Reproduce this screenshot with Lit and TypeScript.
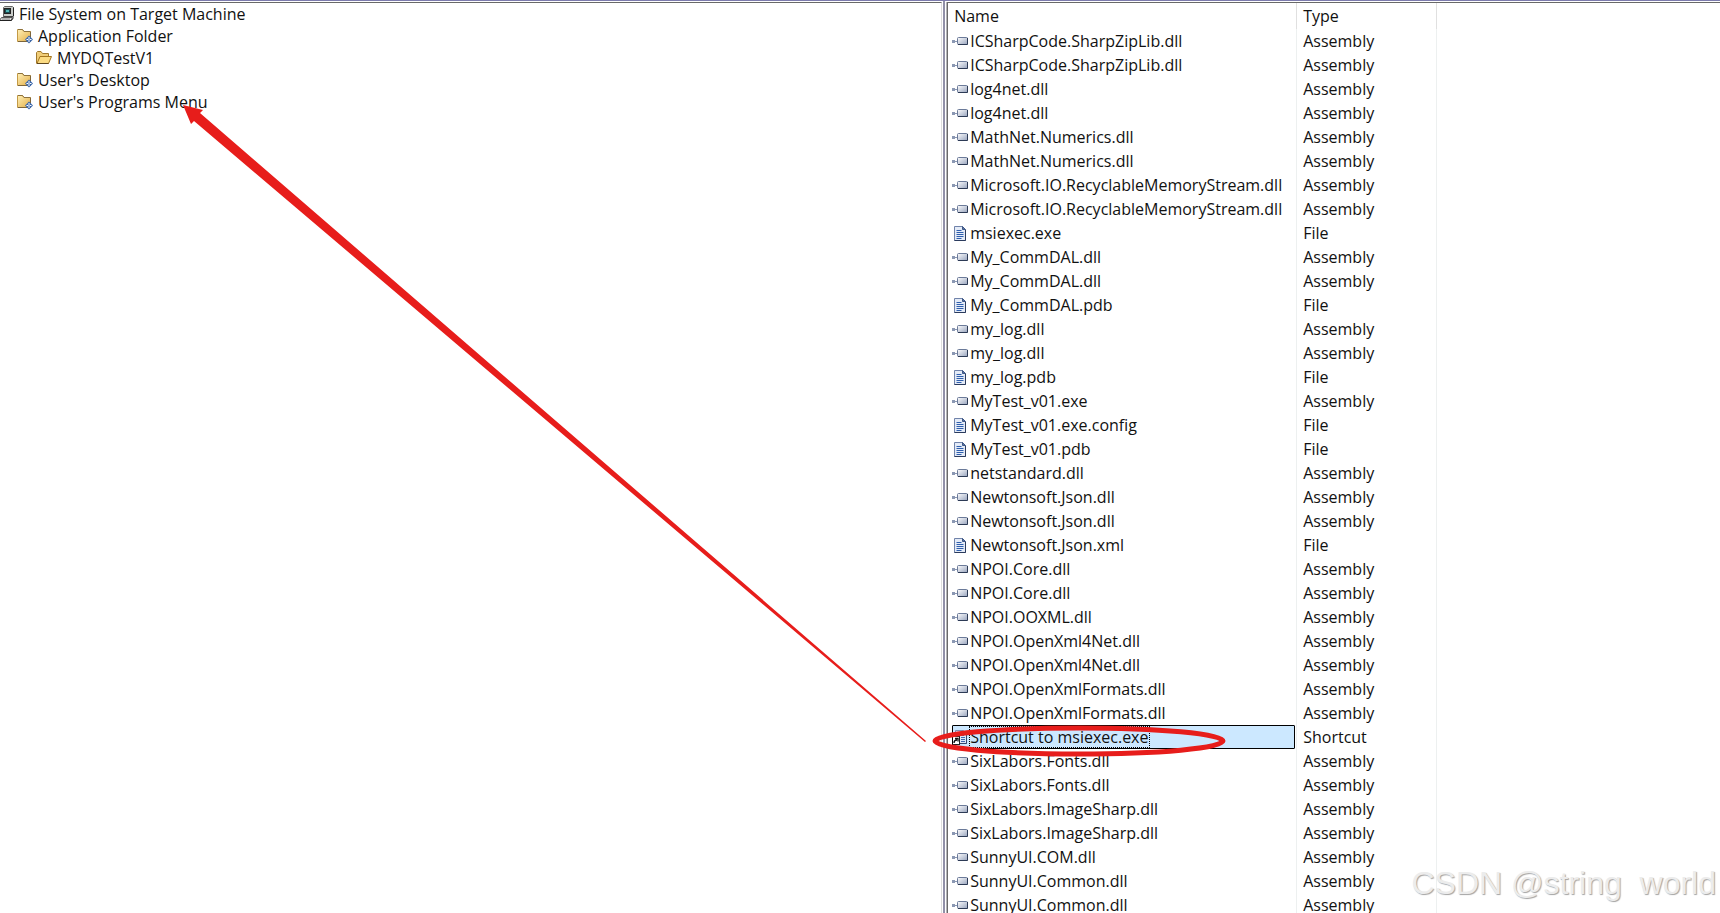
import { LitElement, html, css, svg } from "lit";
import { customElement } from "lit/decorators.js";
import { classMap } from "lit/directives/class-map.js";

type Kind = "assembly" | "file" | "shortcut";

const ROWS: [string, Kind][] = [
  ["ICSharpCode.SharpZipLib.dll", "assembly"],
  ["ICSharpCode.SharpZipLib.dll", "assembly"],
  ["log4net.dll", "assembly"],
  ["log4net.dll", "assembly"],
  ["MathNet.Numerics.dll", "assembly"],
  ["MathNet.Numerics.dll", "assembly"],
  ["Microsoft.IO.RecyclableMemoryStream.dll", "assembly"],
  ["Microsoft.IO.RecyclableMemoryStream.dll", "assembly"],
  ["msiexec.exe", "file"],
  ["My_CommDAL.dll", "assembly"],
  ["My_CommDAL.dll", "assembly"],
  ["My_CommDAL.pdb", "file"],
  ["my_log.dll", "assembly"],
  ["my_log.dll", "assembly"],
  ["my_log.pdb", "file"],
  ["MyTest_v01.exe", "assembly"],
  ["MyTest_v01.exe.config", "file"],
  ["MyTest_v01.pdb", "file"],
  ["netstandard.dll", "assembly"],
  ["Newtonsoft.Json.dll", "assembly"],
  ["Newtonsoft.Json.dll", "assembly"],
  ["Newtonsoft.Json.xml", "file"],
  ["NPOI.Core.dll", "assembly"],
  ["NPOI.Core.dll", "assembly"],
  ["NPOI.OOXML.dll", "assembly"],
  ["NPOI.OpenXml4Net.dll", "assembly"],
  ["NPOI.OpenXml4Net.dll", "assembly"],
  ["NPOI.OpenXmlFormats.dll", "assembly"],
  ["NPOI.OpenXmlFormats.dll", "assembly"],
  ["Shortcut to msiexec.exe", "shortcut"],
  ["SixLabors.Fonts.dll", "assembly"],
  ["SixLabors.Fonts.dll", "assembly"],
  ["SixLabors.ImageSharp.dll", "assembly"],
  ["SixLabors.ImageSharp.dll", "assembly"],
  ["SunnyUI.COM.dll", "assembly"],
  ["SunnyUI.Common.dll", "assembly"],
  ["SunnyUI.Common.dll", "assembly"],
];

const TYPE_LABEL: Record<Kind, string> = { assembly: "Assembly", file: "File", shortcut: "Shortcut" };

const TREE = [
  { label: "File System on Target Machine", depth: 0, icon: "machine" },
  { label: "Application Folder", depth: 1, icon: "special" },
  { label: "MYDQTestV1", depth: 2, icon: "open" },
  { label: "User's Desktop", depth: 1, icon: "special" },
  { label: "User's Programs Menu", depth: 1, icon: "special" },
];

const GLYPHS: Record<string, unknown> = {
  assembly: svg`
    <defs><linearGradient id="a" x2="1" y2="1"><stop offset="0" stop-color="#fff"/><stop offset="1" stop-color="#97a3bd"/></linearGradient></defs>
    <rect x="0" y="7" width="3" height="3" fill="#8b98b3"/><path d="M3 8.500h3" stroke="#8b98b3"/>
    <rect x="5.500" y="4.500" width="10" height="7" rx="1" fill="url(#a)" stroke="#6b7a99"/>
    <path d="M6 11.500h9.500V5" fill="none" stroke="#2c3a55"/>`,
  file: svg`
    <path d="M2.500 1.500h8l3 3v11h-11z" fill="#e4ebf7" stroke="#7083aa"/>
    <path d="M13.500 5v10.500H2.500" fill="none" stroke="#2b3b5d"/>
    <path d="M10.500 1.500v3h3z" fill="#5b74a3" stroke="#3f5886"/>
    <path d="M4.500 5.500h5M4.500 7.500h7M4.500 9.500h7M4.500 11.500h7M4.500 13.500h5" stroke="#2f5fae"/>`,
  shortcut: svg`
    <path d="M3.500 1.500h8l3 3v10h-11z" fill="#dce8f8" stroke="#7d8fb3"/>
    <path d="M14.500 5v9.500H6" fill="none" stroke="#34476d"/>
    <path d="M9 6.500h3M9 8.500h4M9 10.500h4M9 12.500h4" stroke="#3f67ae"/>
    <rect x=".5" y="7.500" width="7" height="8" fill="#fff" stroke="#222"/>
    <path d="M2 14c0-2 1-3 3-3M3 9.500h3v3" fill="none" stroke="#111" stroke-width="1.300"/>`,
  machine: svg`
    <g transform="translate(2 0)">
      <path d="M3.500 1.500l1-1h8l1 1v8l-1 1h-9z" fill="#c9ccc9" stroke="#666"/>
      <path d="M13.500 1.500v8.500l-1 1h-9" fill="none" stroke="#222"/>
      <rect x="4.500" y="2.500" width="6" height="5" fill="#1c4b50" stroke="#222"/>
      <path d="M6 4h3v2H6z" fill="#4fb5b5"/>
      <path d="M1.500 11.500h11l-1.500 3H-.5z" fill="#ddd" stroke="#555"/>
      <path d="M-.5 14.500h12l2-3" fill="none" stroke="#222"/>
      <path d="M2 13h8" stroke="#888"/>
    </g>`,
  special: svg`
    <defs><linearGradient id="f" x2="1" y2="1"><stop offset="0" stop-color="#fff0b8"/><stop offset="1" stop-color="#e3ae45"/></linearGradient></defs>
    <path d="M.5 13.500v-12h5l1.500 2h6.500v10z" fill="url(#f)" stroke="#c39a46"/>
    <path d="M1 13.500h12.500V4" fill="none" stroke="#7d653a"/>
    <path d="M1 1.500h4.500l1.500 2h6.500" fill="none" stroke="#8e723c"/>
    <path d="M12 7.500l4 4-4 4-4-4z" fill="#3c68ac"/>
    <path d="M12 9v5M9.500 11.500h5" stroke="#fff"/><path d="M11.500 11h1v1h-1z" fill="#3c68ac"/>`,
  open: svg`
    <path d="M.5 13.500V2.500l1-1h3.500l1.500 2h6v3" fill="#f0cd78" stroke="#a0782c"/>
    <path d="M1 13.500l3-7h11.500l-3 7z" fill="#fbdb83" stroke="#a5761f"/>
    <path d="M1 13.500h11.500" stroke="#5f4720"/>`,
};

const icon = (name: string) =>
  html`<svg class="icon" viewBox="0 0 16 16" width="16" height="16" aria-hidden="true">${GLYPHS[name]}</svg>`;

@customElement("folder-tree")
class FolderTree extends LitElement {
  static styles = css`
    :host { display: block; }
    .tree { margin: 0; padding: 0; list-style: none; }
    .node { display: flex; align-items: center; gap: 5px; height: 22px; white-space: nowrap; }
    .depth0 { margin-left: -2px; }
    .depth1 { padding-left: 17px; }
    .depth2 { padding-left: 36px; }
    .icon { flex: none; }
  `;

  render() {
    return html`<ul class="tree" role="tree">
      ${TREE.map((n) => html`<li class="node depth${n.depth}" role="treeitem" aria-level=${n.depth + 1}>${icon(n.icon)}<span>${n.label}</span></li>`)}
    </ul>`;
  }
}

@customElement("file-list")
class FileList extends LitElement {
  static styles = css`
    :host { display: block; }
    .list { width: 100%; table-layout: fixed; border-collapse: separate; border-spacing: 0; }
    .col-name { width: 349px; }
    .col-type { width: 140px; }
    th, td { padding: 0; font-weight: 400; text-align: left; white-space: nowrap; box-sizing: border-box; }
    th { height: 26px; padding-left: 6px; border-right: 1px solid #e0e0e0; }
    td { height: 24px; padding-left: 6px; border-right: 1px solid #edf0f0; }
    td.name { padding-left: 4px; }
    th:last-child, td:last-child { border-right: 0; }
    .cell { display: flex; align-items: center; gap: 1px; height: 24px; box-sizing: border-box; }
    .label { line-height: 22px; padding: 0 2px 0 1px; }
    .selected .name { padding: 0 1px 0 4px; }
    .selected .cell { background: #cce8ff; outline: 1px solid #000; outline-offset: -1px; border-radius: 1px; }
    .selected .label { outline: 1px dotted #000; outline-offset: -1px; }
    .icon { flex: none; }
  `;

  render() {
    return html`<table class="list">
      <colgroup><col class="col-name" /><col class="col-type" /><col /></colgroup>
      <thead><tr><th scope="col">Name</th><th scope="col">Type</th><th></th></tr></thead>
      <tbody>
        ${ROWS.map(([name, kind]) => html`<tr class=${classMap({ selected: kind === "shortcut" })}>
          <td class="name"><div class="cell">${icon(kind)}<span class="label">${name}</span></div></td>
          <td>${TYPE_LABEL[kind]}</td><td></td>
        </tr>`)}
      </tbody>
    </table>`;
  }
}

@customElement("app-root")
class AppRoot extends LitElement {
  static styles = css`
    :host {
      display: block; position: relative; height: 100vh; overflow: hidden;
      background: #fff; color: #111;
      font: 16px/22px "Open Sans", "Noto Sans", sans-serif;
    }
    .panes {
      display: grid; grid-template-columns: 549fr 2px 451fr; height: 100%;
      border-top: 1px solid #7c7bad; box-sizing: border-box;
    }
    .pane { overflow: hidden; border-top: 1px solid #696969; margin-top: 1px; }
    .splitter { background: #9190a8; }
    .left { border-right: 1px solid #dcdcdc; margin-right: 1px; }
    .right { border-left: 1px solid #696969; box-shadow: -1px 0 #b4b4b8; margin-left: 2px; }
    .markup { position: absolute; left: 0; top: 0; pointer-events: none; }
    .watermark {
      position: absolute; right: 4px; bottom: 12px; white-space: pre;
      font: 32px/36px "Liberation Sans", sans-serif; color: #ececec;
      text-shadow: 1px 1px 1px #a4a4a4;
    }
  `;

  render() {
    return html`
      <main class="panes">
        <section class="pane left"><folder-tree></folder-tree></section>
        <div class="splitter" role="separator" aria-orientation="vertical"></div>
        <section class="pane right"><file-list></file-list></section>
      </main>
      <svg class="markup" width="1720" height="913" viewBox="0 0 1720 913" aria-hidden="true">
        <path d="M183 105L203 110L200 113L926 741L925 742L194 121L191 124Z" fill="#e71d1b"/>
        <ellipse cx="1079" cy="741" rx="144" ry="13" fill="none" stroke="#e71d1b" stroke-width="5"/>
      </svg>
      <div class="watermark">CSDN @string  world</div>
    `;
  }
}
